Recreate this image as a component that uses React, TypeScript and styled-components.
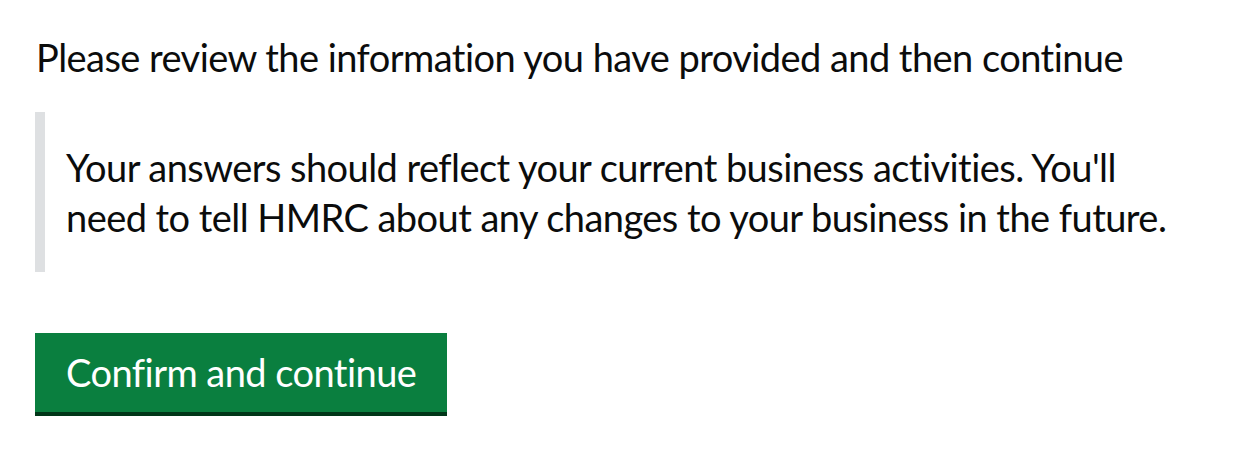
import React from 'react';
import styled, { createGlobalStyle } from 'styled-components';

const GlobalStyle = createGlobalStyle`
  html, body {
    margin: 0;
    padding: 0;
    background: #ffffff;
  }
  body {
    font-family: Lato, 'Noto Sans', 'Liberation Sans', sans-serif;
    font-variant-ligatures: none;
    letter-spacing: -0.55px;
    color: #0b0c0c;
  }
`;

const Page = styled.main`
  padding: 32px 35px 0 35px;
`;

const Lead = styled.p`
  margin: 0 0 30px 1px;
  font-size: 38px;
  line-height: 50px;
  white-space: nowrap;
`;

const Inset = styled.div`
  border-left: 10px solid #dee0e2;
  padding: 30px 20px 30px 21px;
  margin-bottom: 61px;
`;

const InsetLine = styled.span`
  display: block;
  font-size: 38px;
  line-height: 50px;
  white-space: nowrap;
`;

const Button = styled.button`
  display: inline-block;
  margin: 0;
  padding: 12px 31px 13px 31px;
  border: none;
  border-bottom: 4px solid #003618;
  border-radius: 0;
  background: #0a7f3f;
  color: #ffffff;
  font-family: inherit;
  font-size: 38px;
  letter-spacing: inherit;
  line-height: 54px;
  cursor: pointer;
`;

export default function App() {
  return (
    <>
      <GlobalStyle />
      <Page>
        <Lead>Please review the information you have provided and then continue</Lead>
        <Inset>
          <InsetLine>Your answers should reflect your current business activities. You'll</InsetLine>
          <InsetLine>need to tell HMRC about any changes to your business in the future.</InsetLine>
        </Inset>
        <Button type="button">Confirm and continue</Button>
      </Page>
    </>
  );
}
